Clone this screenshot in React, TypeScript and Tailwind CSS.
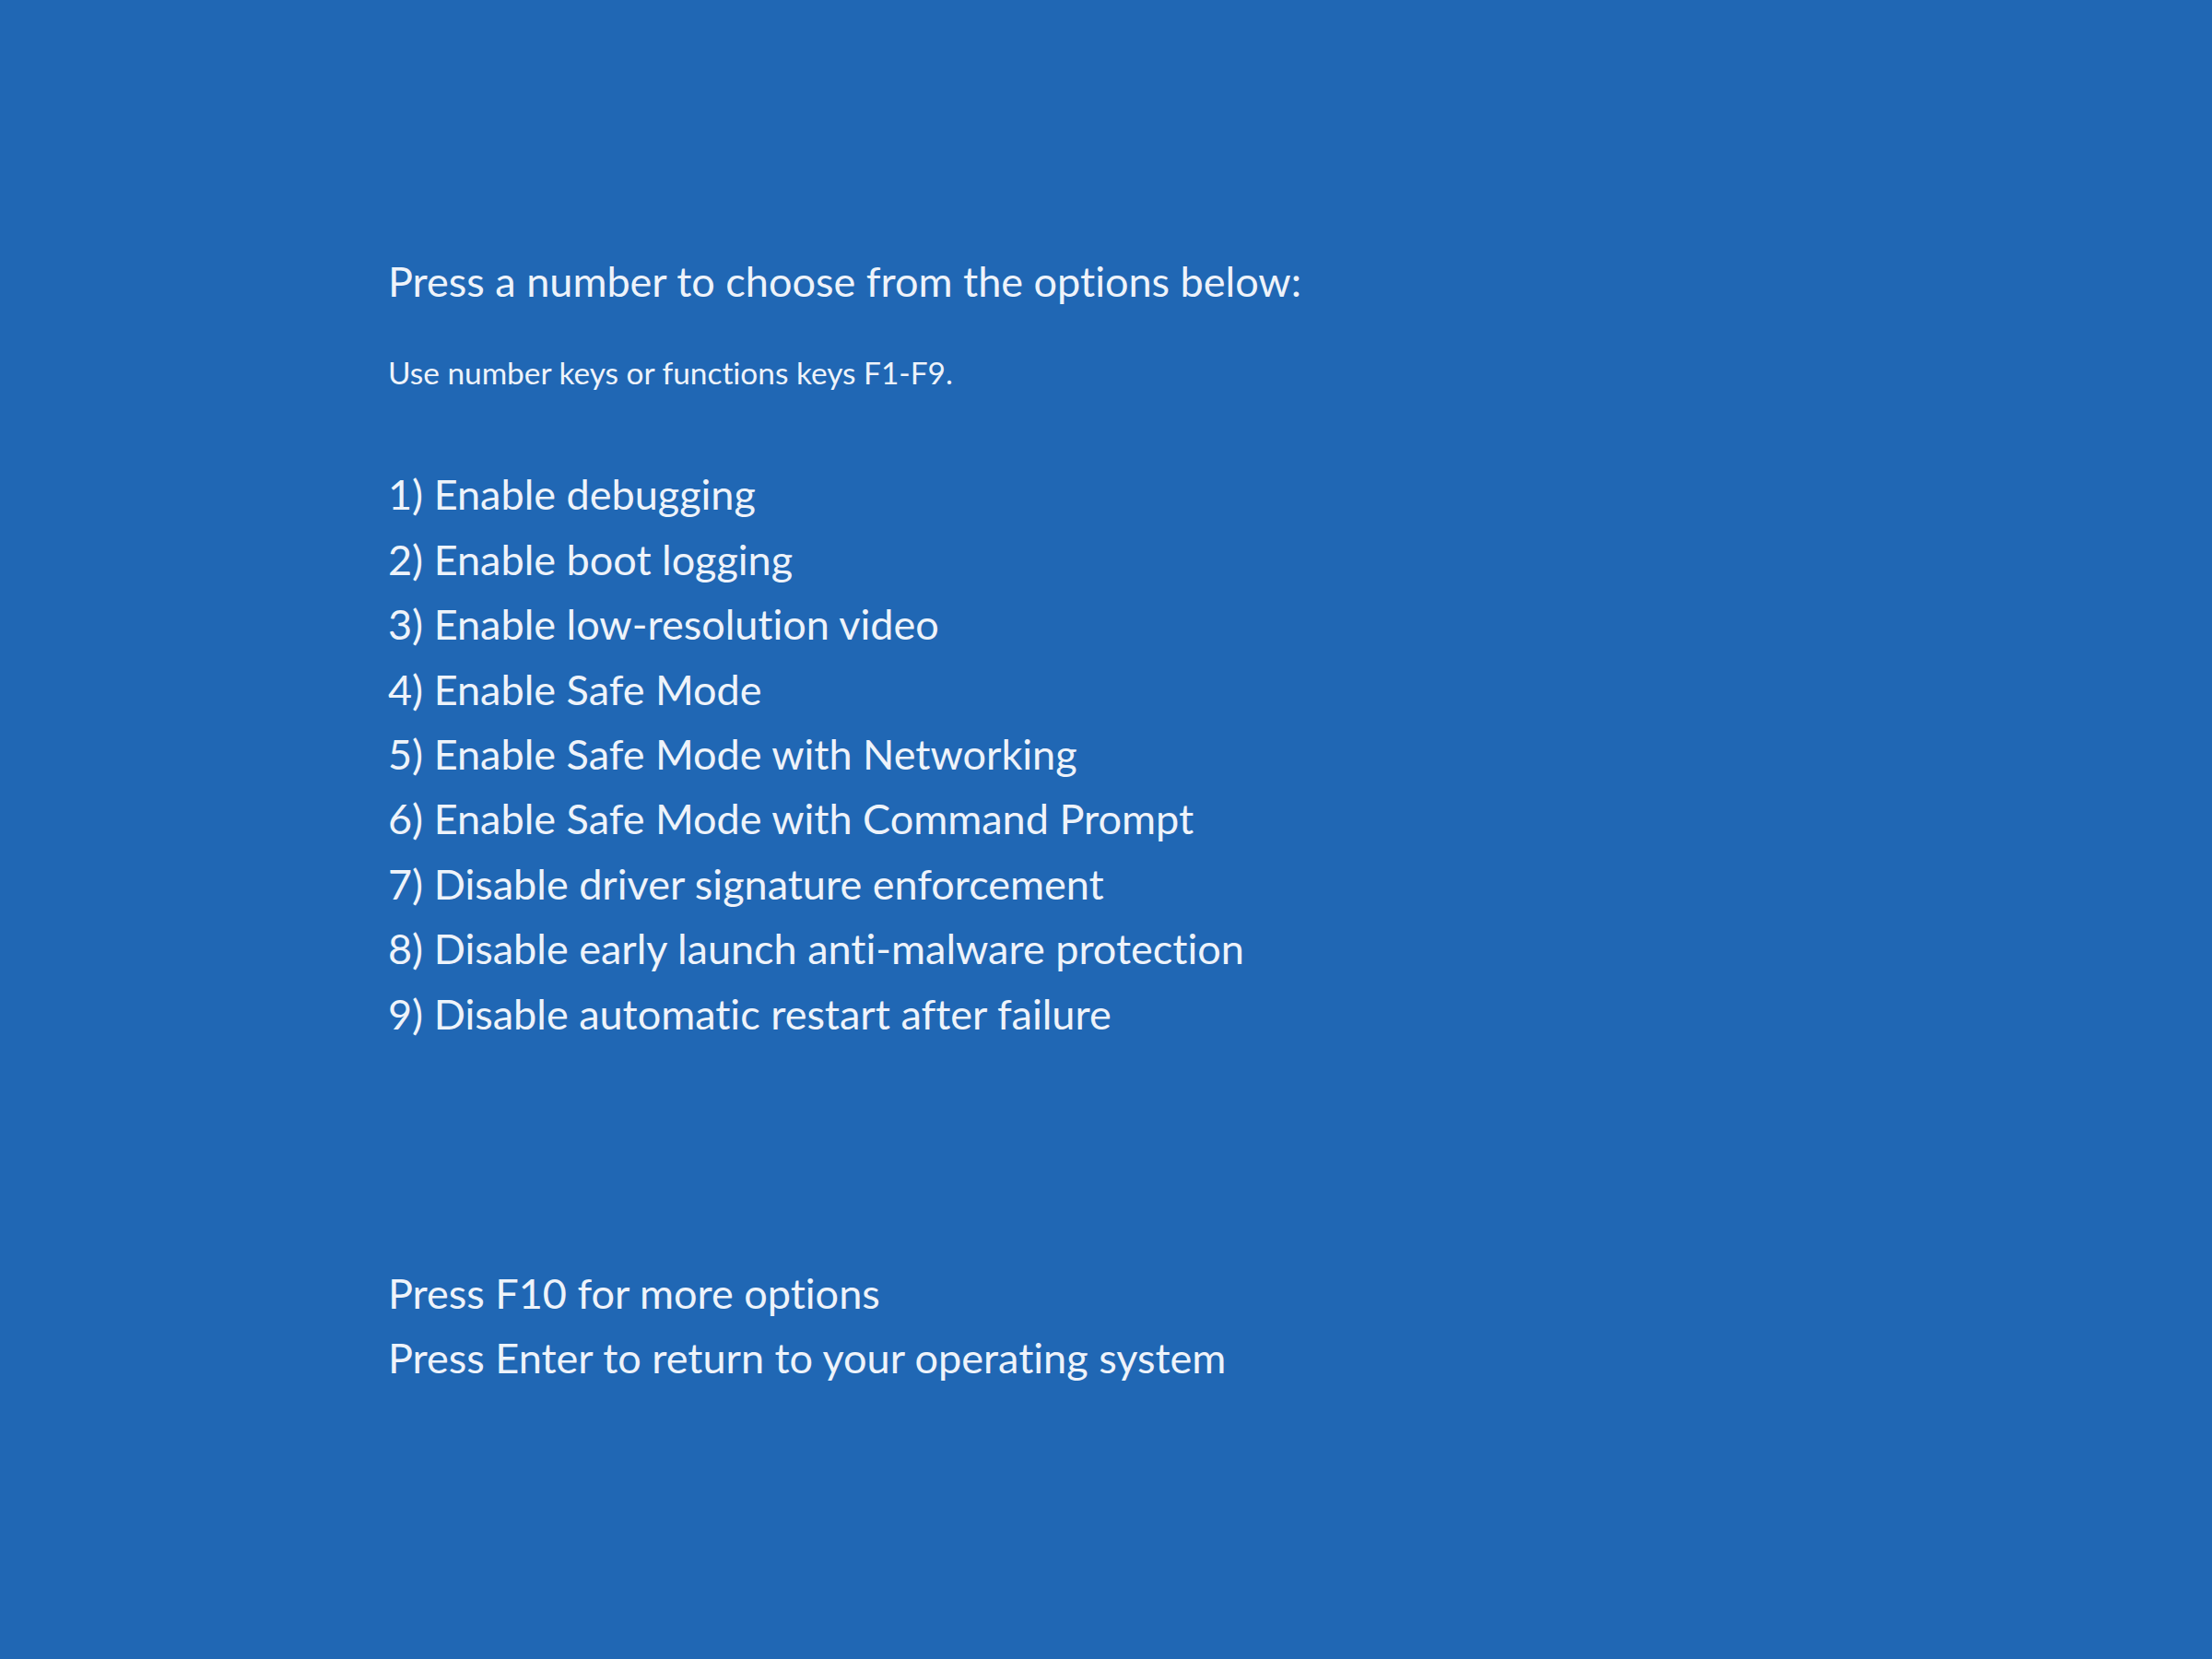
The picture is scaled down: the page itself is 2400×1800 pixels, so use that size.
import React from "react";

const items = [
  "1) Enable debugging",
  "2) Enable boot logging",
  "3) Enable low-resolution video",
  "4) Enable Safe Mode",
  "5) Enable Safe Mode with Networking",
  "6) Enable Safe Mode with Command Prompt",
  "7) Disable driver signature enforcement",
  "8) Disable early launch anti-malware protection",
  "9) Disable automatic restart after failure",
];

export default function App() {
  return (
    <div
      className="w-[2400px] h-[1800px] bg-[#2067b4] text-[#eef3fa] overflow-hidden [font-variant-ligatures:none]"
      style={{ fontFamily: 'Lato, "Open Sans", sans-serif' }}
    >
      <div className="flex flex-col pl-[421px] pt-[270px]">
        <div className="text-[45px] leading-[70.4px]">
          Press a number to choose from the options below:
        </div>
        <div className="mt-[44px] text-[33.4px] leading-[40px]">
          Use number keys or functions keys F1-F9.
        </div>
        <div className="mt-[77px] flex flex-col">
          {items.map((t) => (
            <div key={t} className="text-[45px] leading-[70.4px]">
              {t}
            </div>
          ))}
        </div>
        <div className="mt-[233px] flex flex-col">
          <div className="text-[45px] leading-[70.4px]">Press F10 for more options</div>
          <div className="text-[45px] leading-[70.4px]">
            Press Enter to return to your operating system
          </div>
        </div>
      </div>
    </div>
  );
}
